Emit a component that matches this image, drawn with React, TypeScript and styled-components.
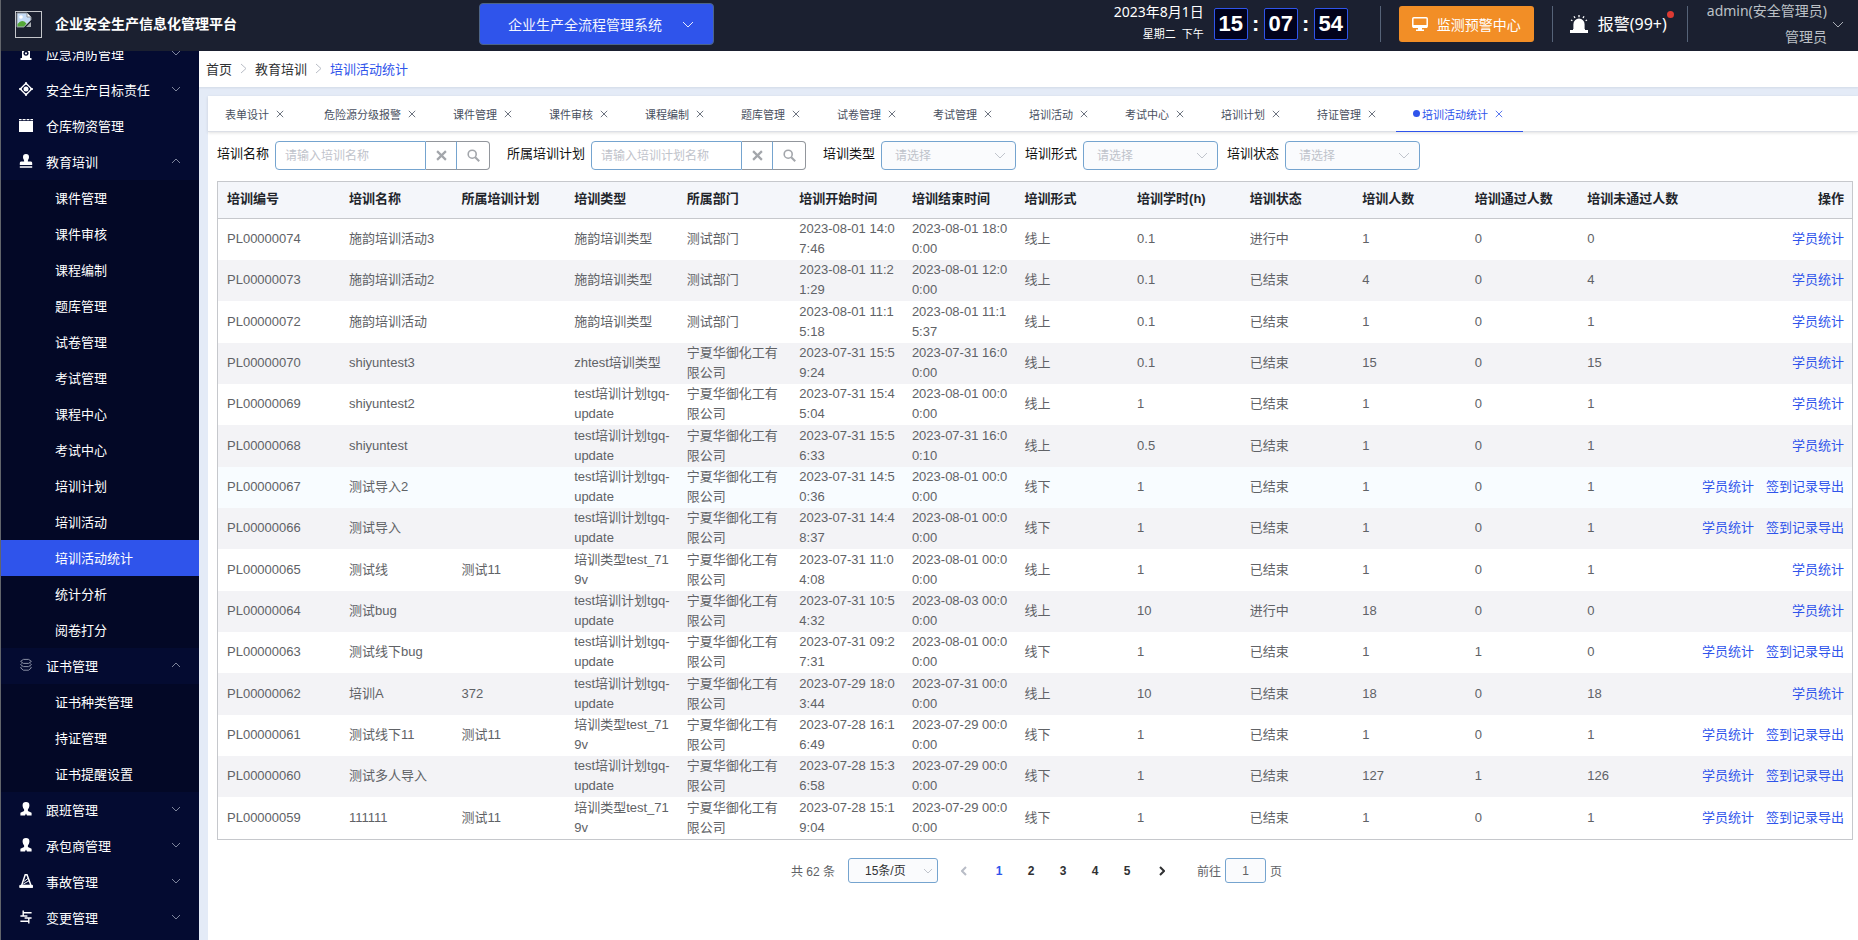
import React from 'react';
import styled, { createGlobalStyle, css } from 'styled-components';

const UI_FONT = '"Liberation Sans", "Noto Sans CJK SC", sans-serif';
const HEAD_FONT = '"Noto Sans", "Noto Sans CJK SC", sans-serif';
const PRIMARY = '#2f54eb';
const FIELD_BORDER = '#75a4cf';

const GlobalStyle = createGlobalStyle`
  *, *::before, *::after { box-sizing: border-box; }
  body { margin: 0; background: #fff; font-family: ${UI_FONT}; font-size: 13px; color: #606266; }
  button, input, select { font: inherit; color: inherit; margin: 0; }
  button { border: 0; padding: 0; background: none; cursor: pointer; }
  a { color: inherit; text-decoration: none; }
  ul, ol { list-style: none; margin: 0; padding: 0; }
  svg { display: block; flex: none; }
`;

/* ---------- shell ---------- */

const Shell = styled.div`
  display: flex;
  flex-direction: column;
  height: 100vh;
  border-left: 1px solid #62656b;
  overflow: hidden;
`;

const Body = styled.div`
  flex: 1;
  display: flex;
  min-height: 0;
`;

/* ---------- header ---------- */

const Header = styled.header`
  display: flex;
  align-items: center;
  flex: none;
  height: 51px;
  padding: 0 14px 3px;
  background: #1b2030;
  color: #fff;
  font-family: ${HEAD_FONT};
  font-size: 14px;
`;

const Brand = styled.div`
  display: flex;
  align-items: center;
  gap: 13px;
  width: 464px;
`;

const LogoFrame = styled.div`
  width: 27px;
  height: 27px;
  border: 1px solid #c4c6ca;
`;

const Title = styled.h1`
  margin: 0;
  font-size: 14px;
  font-weight: 700;
  line-height: 20px;
`;

const SelectBox = styled.span`
  position: relative;
  display: inline-flex;
`;

const SelectArrow = styled.span<{ $right: number }>`
  position: absolute;
  right: ${(p) => p.$right}px;
  top: 0;
  bottom: 0;
  display: flex;
  align-items: center;
  pointer-events: none;
`;

const SystemSelect = styled.select`
  appearance: none;
  width: 235px;
  height: 42px;
  padding: 0 50px 0 28px;
  border: 1px solid #4c6488;
  border-radius: 4px;
  background: ${PRIMARY};
  color: #f2f5ff;
`;

const HeaderRight = styled.div`
  display: flex;
  align-items: center;
  margin-left: auto;
`;

const DateBlock = styled.div`
  display: flex;
  flex-direction: column;
  align-items: flex-end;
  gap: 2px;
  margin-right: 10px;
  padding-bottom: 2px;
  line-height: 20px;
`;

const Weekday = styled.span`
  display: flex;
  gap: 6px;
  font-size: 11px;
`;

const Clock = styled.div`
  display: flex;
  align-items: center;
  font-family: ${UI_FONT};
  font-size: 22px;
  font-weight: 700;
`;

const ClockDigits = styled.span`
  display: flex;
  align-items: center;
  justify-content: center;
  width: 34px;
  height: 32px;
  border: 1px solid ${PRIMARY};
  border-radius: 2px;
  background: #01021c;
`;

const ClockColon = styled.span`
  width: 16px;
  text-align: center;
`;

const Divider = styled.i`
  width: 1px;
  height: 36px;
  background: #566378;
`;

const MonitorButton = styled.button`
  display: flex;
  align-items: center;
  justify-content: center;
  gap: 9px;
  width: 135px;
  height: 36px;
  margin: 0 18px;
  padding-bottom: 1px;
  border-radius: 3px;
  background: #f28e26;
  color: #fff;
`;

const AlarmButton = styled.button`
  display: flex;
  align-items: center;
  gap: 10px;
  margin: 0 20px 0 17px;
  padding-bottom: 1px;
  color: #fff;
  font-size: 16px;
  line-height: 24px;
`;

const AlarmText = styled.span`
  position: relative;
`;

const AlarmDot = styled.i`
  position: absolute;
  top: -1px;
  right: -7px;
  width: 7px;
  height: 7px;
  border-radius: 50%;
  background: #dd3a33;
`;

const UserButton = styled.button`
  display: flex;
  align-items: center;
  gap: 5px;
  margin-left: 19px;
  color: #bcc0c6;
  text-align: right;
  line-height: 26px;
`;

const UserLines = styled.span`
  display: flex;
  flex-direction: column;
`;

const Spacer = styled.span`
  width: 32px;
`;

/* ---------- sidebar ---------- */

const Sidebar = styled.nav`
  flex: none;
  width: 198px;
  overflow: hidden;
  background: #040b31;
`;

/* the menu is scrolled down by a little less than half an entry */
const Menu = styled.ul`
  margin-top: -15px;
`;

const menuRow = css`
  display: flex;
  align-items: center;
  width: 100%;
  height: 36px;
  padding-bottom: 2px;
  color: #fff;
`;

const MenuButton = styled.button`
  ${menuRow}
  padding: 0 18px 2px;
  text-align: left;
`;

const MenuIcon = styled.span`
  width: 27px;
`;

const MenuLabel = styled.span`
  flex: 1;
`;

const SubMenu = styled.ul`
  background: #030826;
`;

const SubLink = styled.a<{ $active: boolean }>`
  ${menuRow}
  padding-left: 54px;
  background: ${(p) => (p.$active ? PRIMARY : 'transparent')};
`;

/* ---------- main ---------- */

const Main = styled.main`
  flex: 1;
  display: flex;
  flex-direction: column;
  min-width: 0;
  background: #e4ebf7;
`;

const Breadcrumb = styled.nav`
  display: flex;
  align-items: center;
  gap: 8px;
  height: 36px;
  flex: none;
  padding: 0 0 2px 7px;
  background: #fff;
  color: #303133;
  box-shadow: 0 1px 2px rgba(0, 21, 41, 0.08);
`;

const Crumb = styled.a<{ $current?: boolean }>`
  color: ${(p) => (p.$current ? PRIMARY : 'inherit')};
`;

const Panel = styled.section`
  flex: 1;
  margin: 9px 0 0 9px;
  background: #fff;
`;

const TabBar = styled.div`
  display: flex;
  height: 36px;
  border-bottom: 1px solid #dcdfe6;
  box-shadow: 0 1px 3px rgba(0, 0, 0, 0.12);
  font-size: 11px;
  color: #495060;
`;

const Tab = styled.div<{ $active: boolean }>`
  display: flex;
  align-items: center;
  gap: 4px;
  height: 36px;
  padding: 0 17px;
  ${(p) => p.$active && css`
    color: ${PRIMARY};
    border-bottom: 1px solid ${PRIMARY};
  `}
  &:first-child { padding-right: 20px; }
`;

const TabDot = styled.i`
  width: 7px;
  height: 7px;
  margin-right: -2px;
  border-radius: 50%;
  background: ${PRIMARY};
`;

const TabClose = styled.button`
  display: flex;
  justify-content: center;
  width: 14px;
`;

const Content = styled.div`
  padding: 9px 5px 0 9px;
`;

const Filters = styled.form`
  display: flex;
  align-items: center;
  margin-bottom: 11px;
`;

const Field = styled.div<{ $gap: number }>`
  display: flex;
  align-items: center;
  gap: 6px;
  margin-right: ${(p) => p.$gap}px;
`;

const FieldLabel = styled.label`
  color: #111;
  line-height: 20px;
  padding-bottom: 3px;
`;

const SearchGroup = styled.div`
  display: flex;
  height: 29px;
`;

const SearchInput = styled.input`
  width: 151px;
  padding: 0 9px;
  border: 1px solid ${FIELD_BORDER};
  border-radius: 4px 0 0 4px;
  background: #fff;
  font-size: 12px;
  outline: none;
  &::placeholder { color: #bfc3cb; opacity: 1; }
`;

const SearchButton = styled.button`
  display: flex;
  align-items: center;
  justify-content: center;
  width: 31px;
  border: 1px solid #92969c;
  border-left: 0;
  border-right-color: ${FIELD_BORDER};
  color: #a3a6ab;
  &:last-child {
    width: 33px;
    border-right-color: #92969c;
    border-radius: 0 4px 4px 0;
  }
`;

const FilterSelect = styled.select`
  appearance: none;
  width: 135px;
  height: 29px;
  padding: 0 13px;
  border: 1px solid ${FIELD_BORDER};
  border-radius: 4px;
  background: #fafbfd;
  color: #bfc3cb;
  font-size: 12px;
`;

/* ---------- table ---------- */

const Table = styled.table`
  width: 100%;
  table-layout: fixed;
  border-collapse: separate;
  border-spacing: 0;
  border: 1px solid #c6c8cc;
  line-height: 20px;
`;

const CodeCol = styled.col`width: 122px;`;
const ActionCol = styled.col`width: 161px;`;

const Th = styled.th`
  height: 37px;
  padding: 0 6px 2px 9px;
  border-bottom: 1px solid #c6c8cc;
  background: #f4f6fa;
  color: #22252b;
  font-weight: 700;
  text-align: left;
  white-space: nowrap;
  &:last-child { text-align: right; padding-right: 8px; }
`;

const Tr = styled.tr<{ $hovered?: boolean }>`
  height: 41px;
  &:nth-child(3n) { height: 42px; }
  &:nth-child(even) { background: #f3f3f6; }
  ${(p) => p.$hovered && css`background: #f8fcff;`}
`;

const Td = styled.td`
  padding: 0 6px 1px 9px;
  word-break: break-all;
  &:last-child { padding-right: 8px; }
`;

const Actions = styled.div`
  display: flex;
  justify-content: flex-end;
  gap: 12px;
  color: ${PRIMARY};
  white-space: nowrap;
`;

/* ---------- pagination ---------- */

const Pager = styled.nav`
  display: flex;
  align-items: center;
  justify-content: center;
  height: 25px;
  margin-top: 18px;
  padding-left: 3px;
  font-size: 12px;
`;

const SizeSelect = styled.select`
  appearance: none;
  width: 90px;
  height: 25px;
  margin: 0 7px 0 13px;
  padding: 0 16px;
  border: 1px solid ${FIELD_BORDER};
  border-radius: 3px;
  background: #fafbfd;
  color: #303133;
`;

const PageButton = styled.button<{ $current?: boolean }>`
  display: flex;
  justify-content: center;
  width: 32px;
  color: ${(p) => (p.$current ? PRIMARY : '#303133')};
  font-weight: 700;
`;

const StepButton = styled(PageButton)`
  width: 38px;
  &:disabled { color: #b8bcc6; }
`;

const JumpLabel = styled.label`
  display: flex;
  align-items: center;
  gap: 4px;
  margin-left: 16px;
`;

const JumpInput = styled.input`
  width: 41px;
  height: 25px;
  border: 1px solid ${FIELD_BORDER};
  border-radius: 3px;
  background: #fafbfd;
  text-align: center;
`;

/* ---------- icons ---------- */

type ChevronProps = { dir: 'up' | 'down' | 'left' | 'right'; w: number; h: number; color: string; stroke?: number };

const Chevron = ({ dir, w, h, color, stroke = 1 }: ChevronProps) => {
  const d = {
    down: `M1 1L${w / 2} ${h - 1}L${w - 1} 1`,
    up: `M1 ${h - 1}L${w / 2} 1L${w - 1} ${h - 1}`,
    right: `M1 1L${w - 1} ${h / 2}L1 ${h - 1}`,
    left: `M${w - 1} 1L1 ${h / 2}L${w - 1} ${h - 1}`,
  }[dir];
  return (
    <svg width={w} height={h} fill="none" stroke={color} strokeWidth={stroke} aria-hidden="true">
      <path d={d} />
    </svg>
  );
};

const Cross = ({ size, stroke }: { size: number; stroke: number }) => (
  <svg width={size} height={size} viewBox="0 0 10 10" stroke="currentColor" strokeWidth={stroke} aria-hidden="true">
    <path d="M1 1L9 9M9 1L1 9" />
  </svg>
);

const Magnifier = () => (
  <svg width="13" height="13" viewBox="0 0 13 13" fill="none" stroke="currentColor" strokeWidth="1.6" aria-hidden="true">
    <circle cx="5.2" cy="5.2" r="4" />
    <path d="M8.2 8.2L12.2 12.2" strokeWidth="2" />
  </svg>
);

const BrokenPicture = () => (
  <svg width="16" height="16" viewBox="0 0 16 16" aria-hidden="true">
    <path d="M1 1H11L15 5V8L8 15H1Z" fill="#c5dbf5" stroke="#8f9398" />
    <path d="M11 1V5H15" fill="#fff" stroke="#8f9398" />
    <circle cx="5" cy="5" r="1.8" fill="#fff" />
    <path d="M1.5 14.5V12Q6 6.5 10.5 11.5L8 14.5Z" fill="#55a838" />
    <path d="M15 10V15H10Z" fill="#a9adb2" />
  </svg>
);

const MonitorIcon = () => (
  <svg width="16" height="14" viewBox="0 0 16 14" aria-hidden="true">
    <rect x=".8" y=".8" width="14.4" height="9.4" rx="1" fill="none" stroke="#fff" strokeWidth="1.5" />
    <path d="M1 8H15V11H1ZM6 11H10V12.4H12V14H4V12.4H6Z" fill="#fff" />
  </svg>
);

const AlarmIcon = () => (
  <svg width="18" height="18" viewBox="0 0 18 18" fill="#fff" aria-hidden="true">
    <path d="M3.4 14.2V9.2a5.6 5.6 0 0 1 11.2 0V14.2ZM0 15H18V18H0Z" />
    <path d="M3 14H15V16H3Z" />
    <path d="M9 0V2.2M4 1.2L5 3M14 1.2L13 3M1 5L2.4 5.8M17 5L15.6 5.8" stroke="#fff" strokeWidth="1.3" />
  </svg>
);

type IconName = 'hydrant' | 'target' | 'box' | 'stamp' | 'layers' | 'person' | 'cone' | 'swap';

const iconShapes: Record<IconName, React.ReactNode> = {
  hydrant: (
    <path fillRule="evenodd" d="M5 1H9L11 3.5V12H12.5V14H1.5V12H3V3.5ZM7 4.6a2.6 2.6 0 1 0 .01 0ZM7 6.2a1.1 1.1 0 1 1-.01 0Z" />
  ),
  target: (
    <>
      <path d="M7 1.2L12.8 7L7 12.8L1.2 7Z" fill="none" stroke="#fff" strokeWidth="1.3" />
      <circle cx="7" cy="7" r="2.5" />
      <path d="M7 0V3M7 11V14M0 7H3M11 7H14" stroke="#fff" strokeWidth="1.4" />
    </>
  ),
  box: <path d="M0 3H14V14H0ZM0 1H2.6V2.2H0ZM3.6 1H6.6V2.2H3.6ZM7.6 1H10.4V2.2H7.6ZM11.4 1H14V2.2H11.4Z" />,
  stamp: <path d="M7 0a3.1 3.1 0 0 1 3 3.2C10 5 8.8 5.6 8.8 7.4H12Q13.2 7.4 13.2 9V11H.8V9Q.8 7.4 2 7.4H5.2C5.2 5.6 4 5 4 3.2A3.1 3.1 0 0 1 7 0ZM.8 12.2H13.2V13.8H.8Z" />,
  layers: (
    <g fill="none" stroke="#8a90a5" strokeWidth="1">
      <path d="M4.4 1.4H9.6L12.4 3.4L9.6 5.4H4.4L1.6 3.4Z" />
      <path d="M2.8 5.4L1.6 6.6L4.4 8.6H9.6L12.4 6.6L11.2 5.4" />
      <path d="M2.8 8.6L1.6 9.8L4.4 12.2H9.6L12.4 9.8L11.2 8.6" />
    </g>
  ),
  person: <path d="M7 0a3.4 3.4 0 0 1 3.4 3.6C10.4 5.6 9.4 6.6 8.9 7.6V9L12.6 10.8V13.6H8L7 11.4L6 13.6H1.4V10.8L5.1 9V7.6C4.6 6.6 3.6 5.6 3.6 3.6A3.4 3.4 0 0 1 7 0Z" />,
  cone: (
    <>
      <path d="M6.2 .8H8L12 11.4H2.6Z" fill="none" stroke="#fff" strokeWidth="1.5" />
      <path d="M5 7.4L9 4.4M4.4 10L10.4 6.6M0.8 11.4H13.6V13.6H.8Z" stroke="#fff" strokeWidth="1" />
    </>
  ),
  swap: (
    <path d="M12.6 2.8H4.2M4.2 .6V6M1.4 6H8.4M1.4 11.2H9.8M9.8 13.4V8M5.6 8H12.6" fill="none" stroke="#fff" strokeWidth="1.4" />
  ),
};

const SideIcon = ({ name }: { name: IconName }) => (
  <svg width="14" height="14" viewBox="0 0 14 14" fill="#fff" aria-hidden="true">
    {iconShapes[name]}
  </svg>
);

/* ---------- data ---------- */

type MenuEntry = { icon: IconName; label: string; leaf?: boolean; children?: string[] };

const menu: MenuEntry[] = [
  { icon: 'hydrant', label: '应急消防管理' },
  { icon: 'target', label: '安全生产目标责任' },
  { icon: 'box', label: '仓库物资管理', leaf: true },
  {
    icon: 'stamp',
    label: '教育培训',
    children: [
      '课件管理', '课件审核', '课程编制', '题库管理', '试卷管理', '考试管理', '课程中心',
      '考试中心', '培训计划', '培训活动', '培训活动统计', '统计分析', '阅卷打分',
    ],
  },
  { icon: 'layers', label: '证书管理', children: ['证书种类管理', '持证管理', '证书提醒设置'] },
  { icon: 'person', label: '跟班管理' },
  { icon: 'person', label: '承包商管理' },
  { icon: 'cone', label: '事故管理' },
  { icon: 'swap', label: '变更管理' },
];

const CURRENT = '培训活动统计';

const tabs = [
  '表单设计', '危险源分级报警', '课件管理', '课件审核', '课程编制', '题库管理', '试卷管理',
  '考试管理', '培训活动', '考试中心', '培训计划', '持证管理', CURRENT,
];

const columns = [
  '培训编号', '培训名称', '所属培训计划', '培训类型', '所属部门', '培训开始时间', '培训结束时间',
  '培训形式', '培训学时(h)', '培训状态', '培训人数', '培训通过人数', '培训未通过人数', '操作',
];

const DEPT = '宁夏华御化工有限公司';
const PLAN = 'test培训计划tgq-update';
const TYPE = '培训类型test_719v';
const HOVERED = 'PL00000067';

const rows: string[][] = [
  ['PL00000074', '施韵培训活动3', '', '施韵培训类型', '测试部门', '2023-08-01 14:07:46', '2023-08-01 18:00:00', '线上', '0.1', '进行中', '1', '0', '0'],
  ['PL00000073', '施韵培训活动2', '', '施韵培训类型', '测试部门', '2023-08-01 11:21:29', '2023-08-01 12:00:00', '线上', '0.1', '已结束', '4', '0', '4'],
  ['PL00000072', '施韵培训活动', '', '施韵培训类型', '测试部门', '2023-08-01 11:15:18', '2023-08-01 11:15:37', '线上', '0.1', '已结束', '1', '0', '1'],
  ['PL00000070', 'shiyuntest3', '', 'zhtest培训类型', DEPT, '2023-07-31 15:59:24', '2023-07-31 16:00:00', '线上', '0.1', '已结束', '15', '0', '15'],
  ['PL00000069', 'shiyuntest2', '', PLAN, DEPT, '2023-07-31 15:45:04', '2023-08-01 00:00:00', '线上', '1', '已结束', '1', '0', '1'],
  ['PL00000068', 'shiyuntest', '', PLAN, DEPT, '2023-07-31 15:56:33', '2023-07-31 16:00:10', '线上', '0.5', '已结束', '1', '0', '1'],
  ['PL00000067', '测试导入2', '', PLAN, DEPT, '2023-07-31 14:50:36', '2023-08-01 00:00:00', '线下', '1', '已结束', '1', '0', '1'],
  ['PL00000066', '测试导入', '', PLAN, DEPT, '2023-07-31 14:48:37', '2023-08-01 00:00:00', '线下', '1', '已结束', '1', '0', '1'],
  ['PL00000065', '测试线', '测试11', TYPE, DEPT, '2023-07-31 11:04:08', '2023-08-01 00:00:00', '线上', '1', '已结束', '1', '0', '1'],
  ['PL00000064', '测试bug', '', PLAN, DEPT, '2023-07-31 10:54:32', '2023-08-03 00:00:00', '线上', '10', '进行中', '18', '0', '0'],
  ['PL00000063', '测试线下bug', '', PLAN, DEPT, '2023-07-31 09:27:31', '2023-08-01 00:00:00', '线下', '1', '已结束', '1', '1', '0'],
  ['PL00000062', '培训A', '372', PLAN, DEPT, '2023-07-29 18:03:44', '2023-07-31 00:00:00', '线上', '10', '已结束', '18', '0', '18'],
  ['PL00000061', '测试线下11', '测试11', TYPE, DEPT, '2023-07-28 16:16:49', '2023-07-29 00:00:00', '线下', '1', '已结束', '1', '0', '1'],
  ['PL00000060', '测试多人导入', '', PLAN, DEPT, '2023-07-28 15:36:58', '2023-07-29 00:00:00', '线下', '1', '已结束', '127', '1', '126'],
  ['PL00000059', '111111', '测试11', TYPE, DEPT, '2023-07-28 15:19:04', '2023-07-29 00:00:00', '线下', '1', '已结束', '1', '0', '1'],
];

/* ---------- parts ---------- */

const TextFilter = ({ id, label, placeholder }: { id: string; label: string; placeholder: string }) => (
  <Field $gap={17}>
    <FieldLabel htmlFor={id}>{label}</FieldLabel>
    <SearchGroup>
      <SearchInput id={id} type="text" placeholder={placeholder} />
      <SearchButton type="button" aria-label="清空"><Cross size={11} stroke={2} /></SearchButton>
      <SearchButton type="submit" aria-label="搜索"><Magnifier /></SearchButton>
    </SearchGroup>
  </Field>
);

const ChoiceFilter = ({ id, label }: { id: string; label: string }) => (
  <Field $gap={9}>
    <FieldLabel htmlFor={id}>{label}</FieldLabel>
    <SelectBox>
      <FilterSelect id={id}><option>请选择</option></FilterSelect>
      <SelectArrow $right={10}><Chevron dir="down" w={12} h={7} color="#c0c4cc" /></SelectArrow>
    </SelectBox>
  </Field>
);

const TopBar = () => (
  <Header>
    <Brand>
      <LogoFrame><BrokenPicture /></LogoFrame>
      <Title>企业安全生产信息化管理平台</Title>
    </Brand>
    <SelectBox>
      <SystemSelect aria-label="系统"><option>企业生产全流程管理系统</option></SystemSelect>
      <SelectArrow $right={20}><Chevron dir="down" w={12} h={7} color="#e6ebff" /></SelectArrow>
    </SelectBox>
    <HeaderRight>
      <DateBlock>
        <span>2023年8月1日</span>
        <Weekday><span>星期二</span><span>下午</span></Weekday>
      </DateBlock>
      <Clock>
        <ClockDigits>15</ClockDigits>
        <ClockColon>:</ClockColon>
        <ClockDigits>07</ClockDigits>
        <ClockColon>:</ClockColon>
        <ClockDigits>54</ClockDigits>
      </Clock>
      <Spacer />
      <Divider />
      <MonitorButton type="button"><MonitorIcon />监测预警中心</MonitorButton>
      <Divider />
      <AlarmButton type="button">
        <AlarmIcon />
        <AlarmText>报警(99+)<AlarmDot /></AlarmText>
      </AlarmButton>
      <Divider />
      <UserButton type="button">
        <UserLines><span>admin(安全管理员)</span><span>管理员</span></UserLines>
        <Chevron dir="down" w={12} h={7} color="#a9adb5" />
      </UserButton>
    </HeaderRight>
  </Header>
);

const SideMenu = () => (
  <Sidebar>
    <Menu>
      {menu.map((m) => (
        <li key={m.label}>
          <MenuButton type="button">
            <MenuIcon><SideIcon name={m.icon} /></MenuIcon>
            <MenuLabel>{m.label}</MenuLabel>
            {!m.leaf && <Chevron dir={m.children ? 'up' : 'down'} w={10} h={6} color="#7d849b" />}
          </MenuButton>
          {m.children && (
            <SubMenu>
              {m.children.map((c) => (
                <li key={c}><SubLink href="#" $active={c === CURRENT}>{c}</SubLink></li>
              ))}
            </SubMenu>
          )}
        </li>
      ))}
    </Menu>
  </Sidebar>
);

const DataTable = () => (
  <Table>
    <colgroup>
      <CodeCol />
      {columns.slice(1, -1).map((c) => <col key={c} />)}
      <ActionCol />
    </colgroup>
    <thead>
      <tr>{columns.map((c) => <Th key={c} scope="col">{c}</Th>)}</tr>
    </thead>
    <tbody>
      {rows.map((r) => (
        <Tr key={r[0]} $hovered={r[0] === HOVERED}>
          {r.map((cell, i) => <Td key={columns[i]}>{cell}</Td>)}
          <Td>
            <Actions>
              <a href="#">学员统计</a>
              {r[7] === '线下' && <a href="#">签到记录导出</a>}
            </Actions>
          </Td>
        </Tr>
      ))}
    </tbody>
  </Table>
);

const Pagination = () => (
  <Pager aria-label="分页">
    <span>共 62 条</span>
    <SelectBox>
      <SizeSelect aria-label="每页条数"><option>15条/页</option></SizeSelect>
      <SelectArrow $right={12}><Chevron dir="down" w={10} h={6} color="#c0c4cc" /></SelectArrow>
    </SelectBox>
    <StepButton type="button" disabled aria-label="上一页"><Chevron dir="left" w={6} h={10} color="currentColor" stroke={2} /></StepButton>
    {['1', '2', '3', '4', '5'].map((n) => (
      <PageButton key={n} type="button" $current={n === '1'}>{n}</PageButton>
    ))}
    <StepButton type="button" aria-label="下一页"><Chevron dir="right" w={6} h={10} color="currentColor" stroke={2} /></StepButton>
    <JumpLabel>
      前往
      <JumpInput type="text" defaultValue="1" />
      页
    </JumpLabel>
  </Pager>
);

export default function App() {
  return (
    <>
      <GlobalStyle />
      <Shell>
        <TopBar />
        <Body>
          <SideMenu />
          <Main>
            <Breadcrumb aria-label="面包屑">
              <Crumb href="#">首页</Crumb>
              <Chevron dir="right" w={7} h={11} color="#b9bdc6" />
              <Crumb href="#">教育培训</Crumb>
              <Chevron dir="right" w={7} h={11} color="#b9bdc6" />
              <Crumb href="#" $current>{CURRENT}</Crumb>
            </Breadcrumb>
            <Panel>
              <TabBar>
                {tabs.map((t) => (
                  <Tab key={t} $active={t === CURRENT}>
                    {t === CURRENT && <TabDot />}
                    <a href="#">{t}</a>
                    <TabClose type="button" aria-label={`关闭${t}`}><Cross size={8} stroke={1} /></TabClose>
                  </Tab>
                ))}
              </TabBar>
              <Content>
                <Filters onSubmit={(e) => e.preventDefault()}>
                  <TextFilter id="f-name" label="培训名称" placeholder="请输入培训名称" />
                  <TextFilter id="f-plan" label="所属培训计划" placeholder="请输入培训计划名称" />
                  <ChoiceFilter id="f-type" label="培训类型" />
                  <ChoiceFilter id="f-form" label="培训形式" />
                  <ChoiceFilter id="f-state" label="培训状态" />
                </Filters>
                <DataTable />
                <Pagination />
              </Content>
            </Panel>
          </Main>
        </Body>
      </Shell>
    </>
  );
}
